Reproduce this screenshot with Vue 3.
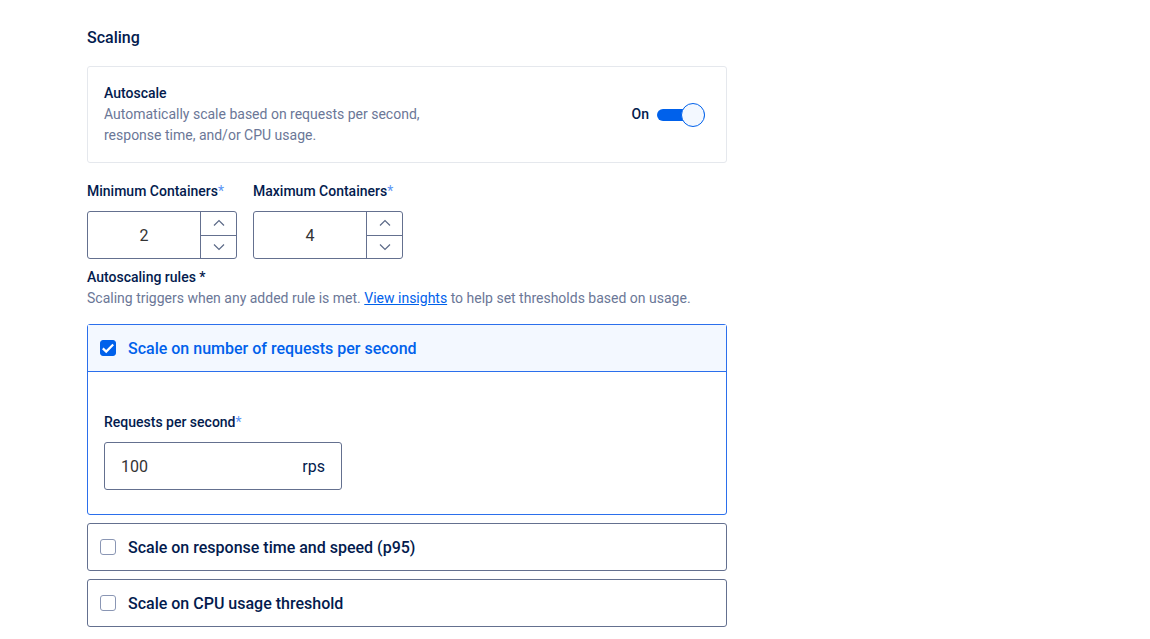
<script setup>
import { reactive, ref } from 'vue'

const autoscale = ref(true)
const containers = reactive([
  { id: 'min', label: 'Minimum Containers', value: 2 },
  { id: 'max', label: 'Maximum Containers', value: 4 },
])
const rps = ref('100')
const rules = reactive([
  { id: 'rps', label: 'Scale on number of requests per second', on: true },
  { id: 'p95', label: 'Scale on response time and speed (p95)', on: false },
  { id: 'cpu', label: 'Scale on CPU usage threshold', on: false },
])
</script>

<template>
  <main class="page">
    <h2 class="heading">Scaling</h2>

    <section class="card">
      <div class="card-text">
        <h3 class="label">Autoscale</h3>
        <p class="muted">Automatically scale based on requests per second, response time, and/or CPU usage.</p>
      </div>
      <label class="toggle">
        <span class="label">{{ autoscale ? 'On' : 'Off' }}</span>
        <input v-model="autoscale" type="checkbox" role="switch" class="switch" />
      </label>
    </section>

    <div class="containers">
      <div v-for="c in containers" :key="c.id" class="field">
        <label class="label" :for="c.id">{{ c.label }}<span class="star">*</span></label>
        <div class="stepper">
          <input :id="c.id" v-model.number="c.value" type="text" inputmode="numeric" class="count" />
          <div class="steps">
            <button type="button" :aria-label="'Increase ' + c.label" @click="c.value++">
              <svg width="12" height="8" viewBox="0 0 12 8"><path d="M1 6.5 6 1.5l5 5" /></svg>
            </button>
            <button type="button" :aria-label="'Decrease ' + c.label" @click="c.value--">
              <svg width="12" height="8" viewBox="0 0 12 8"><path d="M1 1.5l5 5 5-5" /></svg>
            </button>
          </div>
        </div>
      </div>
    </div>

    <h3 class="label">Autoscaling rules *</h3>
    <p class="muted">Scaling triggers when any added rule is met. <a href="#insights">View insights</a> to help set thresholds based on usage.</p>

    <div class="rules">
      <section v-for="r in rules" :key="r.id" class="rule" :class="{ on: r.on }">
        <label class="rule-head">
          <span class="tick">
            <input v-model="r.on" type="checkbox" />
            <svg v-if="r.on" width="16" height="16" viewBox="0 0 16 16"><path d="M2.8 8.4 6.2 11.6 13.2 4.4" /></svg>
          </span>
          <span>{{ r.label }}</span>
        </label>
        <div v-if="r.on && r.id === 'rps'" class="rule-body">
          <label class="label" for="rps-value">Requests per second<span class="star">*</span></label>
          <div class="unit-box">
            <input id="rps-value" v-model="rps" type="text" inputmode="numeric" />
            <span>rps</span>
          </div>
        </div>
      </section>
    </div>
  </main>
</template>

<style>
body {
  background: #fff;
}
</style>

<style scoped>
.page {
  box-sizing: border-box;
  max-width: 814px;
  padding: 27px 87px 12px;
  font-family: Roboto, "Liberation Sans", sans-serif;
  font-size: 14px;
  line-height: 21px;
  color: #031b4e;
}
h2, h3, p {
  margin: 0;
}
.heading {
  font-size: 16px;
  font-weight: 500;
}
.label {
  font-size: 14px;
  font-weight: 500;
}
.muted {
  color: #6b7797;
}
.card {
  display: flex;
  align-items: center;
  justify-content: space-between;
  margin-top: 18px;
  padding: 16px 21px 16px 16px;
  border: 1px solid #e5e8ed;
  border-radius: 3px;
}
.card-text {
  max-width: 340px;
}
.toggle {
  display: flex;
  align-items: center;
  gap: 8px;
}
.switch {
  appearance: none;
  position: relative;
  display: flex;
  align-items: center;
  width: 48px;
  height: 24px;
  margin: 0;
}
.switch::before {
  content: "";
  flex: 1;
  height: 12px;
  border-radius: 6px;
  background: #a5b0c8;
}
.switch::after {
  content: "";
  position: absolute;
  left: 0;
  box-sizing: border-box;
  width: 24px;
  height: 24px;
  border: 1px solid #0061eb;
  border-radius: 50%;
  background: #f3f8ff;
}
.switch:checked::before {
  background: #0061eb;
}
.switch:checked::after {
  left: 24px;
}
.containers {
  display: flex;
  gap: 16px;
  margin: 18px 0 8px;
}
.field {
  width: 150px;
}
.field .label,
.rule-body .label {
  display: block;
}
.star {
  color: #5c95f5;
  font-weight: 400;
}
.stepper {
  display: flex;
  box-sizing: border-box;
  height: 48px;
  margin-top: 9px;
  border: 1px solid #64708f;
  border-radius: 3px;
}
.count {
  flex: 1;
  min-width: 0;
  padding: 0;
  border: 0;
  background: none;
  text-align: center;
  font: inherit;
  font-size: 16px;
  color: #333;
  outline: none;
}
.steps {
  display: flex;
  flex-direction: column;
  width: 35px;
  border-left: 1px solid #64708f;
}
.steps button {
  flex: 1;
  display: flex;
  align-items: center;
  justify-content: center;
  padding: 0;
  border: 0;
  background: none;
}
.steps button + button {
  border-top: 1px solid #64708f;
}
svg {
  display: block;
  fill: none;
}
.steps path {
  stroke: #5b6987;
  stroke-width: 1.2;
}
a {
  color: #0061eb;
}
.rules {
  display: flex;
  flex-direction: column;
  gap: 8px;
  margin-top: 15px;
}
.rule {
  border: 1px solid #64708f;
  border-radius: 3px;
}
.rule-head {
  display: flex;
  align-items: center;
  gap: 12px;
  height: 46px;
  padding: 0 12px;
  font-size: 16px;
  font-weight: 500;
}
.rule.on {
  border-color: #2b6fec;
}
.on .rule-head {
  background: #f3f8ff;
  border-bottom: 1px solid #2b6fec;
  color: #0061eb;
}
.tick {
  display: grid;
}
.tick > * {
  grid-area: 1 / 1;
}
.tick input {
  appearance: none;
  box-sizing: border-box;
  width: 16px;
  height: 16px;
  margin: 0;
  border: 1px solid #8a96b4;
  border-radius: 3px;
  background: #fff;
}
.tick input:checked {
  border-color: #0061eb;
  background: #0061eb;
}
.tick svg {
  position: relative;
  pointer-events: none;
}
.tick path {
  stroke: #fff;
  stroke-width: 2.2;
}
.rule-body {
  padding: 40px 16px 24px;
}
.unit-box {
  display: flex;
  align-items: center;
  box-sizing: border-box;
  width: 238px;
  height: 48px;
  margin-top: 9px;
  padding: 0 16px;
  border: 1px solid #64708f;
  border-radius: 3px;
  font-size: 16px;
}
.unit-box input {
  flex: 1;
  min-width: 0;
  padding: 0;
  border: 0;
  background: none;
  font: inherit;
  color: #333;
  outline: none;
}
</style>
